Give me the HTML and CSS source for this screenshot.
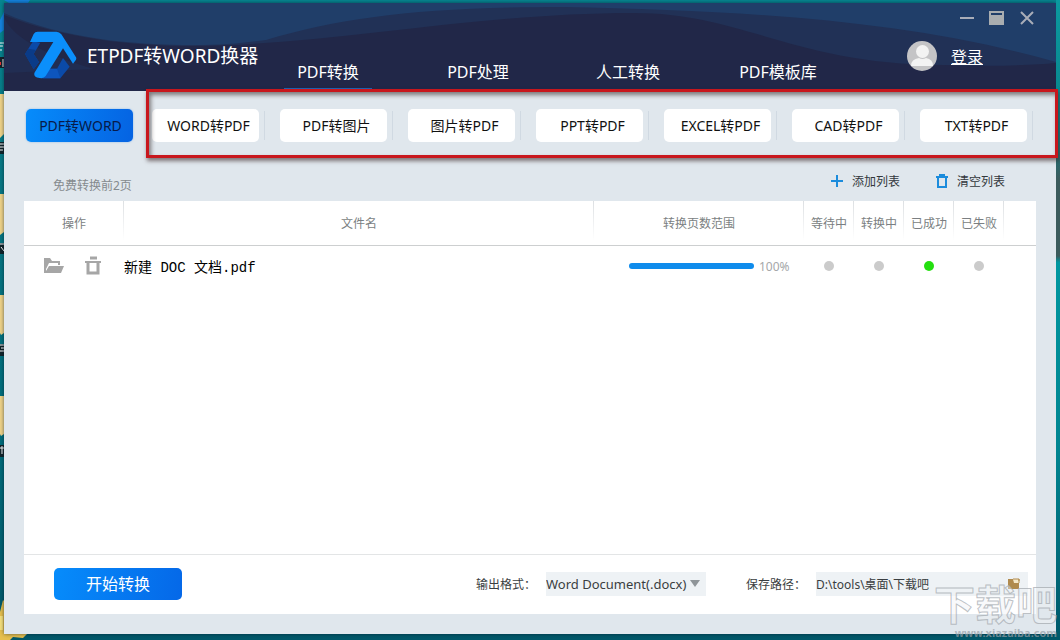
FILE: index.html
```html
<!DOCTYPE html>
<html lang="zh-CN">
<head>
<meta charset="utf-8">
<title>ETPDF转WORD换器</title>
<link rel="stylesheet" href="styles.css">
</head>
<body>
<svg class="desktop-icons" width="32" height="640" viewBox="0 0 32 640" aria-hidden="true">
  <path d="M4 0h26l-2 3H9z" fill="#1583e0"/>
  <path d="M0 20l4-8v18l-4 3z" fill="#1583e0"/>
  <path d="M0 43h4M0 46h3M0 50h2" stroke="#fff"/>
  <path d="M0 57h4v11H0z" fill="#15232b"/><path d="M0 62h1v3H0z" fill="#e33"/><path d="M3 59v8" stroke="#fff"/>
  <g fill="#f0d489"><path d="M0 94h4v40l-4 4z"/><path d="M0 194h4v38l-4 3z"/><path d="M0 295h4v38l-3 2-1-2z"/><path d="M0 396h4v38l-3 2-1-2z"/></g>
  <g fill="#12242a"><path d="M0 142h4v12H0z"/><path d="M0 243h4v11H0z"/><path d="M0 344h4v12H0z"/><path d="M0 445h4v12H0z"/></g>
  <path d="M0 144h4M0 147h4M0 150h3M0 244h4M1 247l3 4M0 345h4M1 348h3M0 351h4M0 448h4M2 446v8" stroke="#fff"/>
  <path d="M0 612l3-12 2 2v32h22l-4 4-10-1-3 3H0z" fill="#e6bf4e"/>
  <path d="M0 616h3v14H0z" fill="#f6e07c"/>
</svg>
<div class="window">
  <header class="header">
    <svg class="waves" viewBox="0 0 1052 88" preserveAspectRatio="none" aria-hidden="true">
      <path d="M0 12C0 12 0 40 90 66L0 70z" fill="#212d52"/>
      <path d="M0 12C60 36 130 43 190 43C330 42 470 10 630 10C740 10 790 62 940 62C990 64 1030 62 1052 60V0H0z" fill="#213156"/>
      <path d="M0 10C60 36 130 42 190 42C220 42 240 40 262 37C340 14 420 4 560 4C740 8 900 16 1052 59V0H0z" fill="#203e69"/>
    </svg>
    <div class="brand">
      <svg class="logo" width="64" height="58" viewBox="0 0 192 174" aria-hidden="true">
        <path d="M42 46L18 84L44 130L60 108L44 84L64 50z" fill="#0b4aa8"/>
        <path d="M18 84l10-16 22 4-6 12 16 24-16 22z" fill="#0a3b88"/>
        <path d="M66 157H124L152 122L132 96L114 128H88z" fill="#0b4aa8"/>
        <path d="M88 128h26l10 29H70z" fill="#0d55bd"/>
        <path d="M44 24Q48 17 56 17H112Q121 17 127 25L171 94Q173 97 171 101L162 113L132 67L80 150Q74 158 62 156Q43 155 46 141L103 48H33z" fill="#0b8ffb"/>
      </svg>
      <h1 class="title">ETPDF转WORD换器</h1>
    </div>
    <nav class="nav">
      <a class="nav-item active" href="#convert">PDF转换</a>
      <a class="nav-item" href="#process">PDF处理</a>
      <a class="nav-item" href="#manual">人工转换</a>
      <a class="nav-item" href="#templates">PDF模板库</a>
    </nav>
    <div class="account">
      <div class="controls">
        <button class="control" aria-label="最小化"><svg width="16" height="16" viewBox="0 0 16 16"><path d="M1 8h14" stroke="#a9adb8" stroke-width="2"/></svg></button>
        <button class="control" aria-label="最大化"><svg width="16" height="16" viewBox="0 0 16 16"><path fill-rule="evenodd" d="M0 1h15v14H0zM2 3v2h11V3z" fill="#a9adb0"/></svg></button>
        <button class="control" aria-label="关闭"><svg width="16" height="16" viewBox="0 0 16 16"><path d="M2 2l12 12M14 2L2 14" stroke="#a9adb8" stroke-width="2"/></svg></button>
      </div>
      <div class="login">
        <svg width="30" height="30" viewBox="0 0 30 30" aria-hidden="true"><circle cx="15" cy="15" r="15" fill="#c4c4c6"/><circle cx="15.500" cy="10.500" r="6.500" fill="#f3f3f3"/><path d="M4 25Q4 18 12 17Q15.500 19 19 17Q26 18 26 25z" fill="#f3f3f3"/></svg>
        <a href="#login">登录</a>
      </div>
    </div>
  </header>

  <section class="modes">
    <button class="mode selected">PDF转WORD</button>
    <button class="mode">WORD转PDF</button>
    <button class="mode">PDF转图片</button>
    <button class="mode">图片转PDF</button>
    <button class="mode">PPT转PDF</button>
    <button class="mode">EXCEL转PDF</button>
    <button class="mode">CAD转PDF</button>
    <button class="mode">TXT转PDF</button>
    <div class="highlight"></div>
  </section>

  <div class="list-bar">
    <span class="hint">免费转换前2页</span>
    <div class="list-actions">
      <button class="action"><svg width="14" height="14" viewBox="0 0 14 14"><path d="M7 1v12M1 7h12" stroke="#1c8cdc" stroke-width="2"/></svg>添加列表</button>
      <button class="action"><svg width="14" height="14" viewBox="0 0 14 14"><path d="M3 4v9h8V4M1 3h12M4 1h6" fill="none" stroke="#1c8cdc" stroke-width="2"/></svg>清空列表</button>
    </div>
  </div>

  <main class="panel">
    <table class="files">
      <colgroup><col class="c-op"><col><col class="c-range"><col class="c-state"><col class="c-state"><col class="c-state"><col class="c-state"><col class="c-end"></colgroup>
      <thead>
        <tr><th>操作</th><th>文件名</th><th>转换页数范围</th><th>等待中</th><th>转换中</th><th>已成功</th><th>已失败</th><td></td></tr>
      </thead>
      <tbody>
        <tr>
          <td>
            <div class="row-tools">
              <button class="tool" aria-label="打开文件夹"><svg width="20" height="20" viewBox="0 0 20 20"><path d="M0 2h6l2 3h8v4h-2V7H5L2 13v4H0z" fill="#a6a6a6"/><path d="M5 10h15l-3 7H0v-2h2z" fill="#a6a6a6"/></svg></button>
              <button class="tool" aria-label="删除"><svg width="20" height="20" viewBox="0 0 20 20"><path d="M4 6v11h10V6" fill="none" stroke="#a6a6a6" stroke-width="3"/><path d="M1 6h16" stroke="#a6a6a6" stroke-width="2"/><path d="M6 2h7" stroke="#a6a6a6" stroke-width="3"/></svg></button>
            </div>
          </td>
          <td class="file-name">新建 DOC 文档.pdf</td>
          <td><div class="progress"><progress class="bar" id="p1" max="100" value="100"></progress><label for="p1">100%</label></div></td>
          <td><span class="dot"></span></td>
          <td><span class="dot"></span></td>
          <td><span class="dot done"></span></td>
          <td><span class="dot"></span></td>
          <td></td>
        </tr>
      </tbody>
    </table>
    <footer class="footer">
      <button class="start">开始转换</button>
      <div class="field">
        <label for="format">输出格式：</label>
        <div class="select-box">
          <select id="format"><option>Word Document(.docx)</option></select>
          <svg class="caret" width="10" height="7" viewBox="0 0 10 7" aria-hidden="true"><path d="M0 0h10L5 7z" fill="#8f9599"/></svg>
        </div>
      </div>
      <div class="field">
        <label for="path">保存路径：</label>
        <div class="path-box">
          <input id="path" type="text" value="D:\tools\桌面\下载吧">
          <button class="browse" aria-label="浏览"><svg width="12" height="12" viewBox="0 0 12 12"><path d="M0 1h5l1 2h5v8H0z" fill="#b08a4d"/><path d="M5 1h6v4H6z" fill="#f4e7c8"/><path d="M5 1h6v2M11 1v4" fill="none" stroke="#b08a4d"/><path d="M0 5h5l1 1h5v5H0z" fill="#b08a4d"/></svg></button>
        </div>
      </div>
    </footer>
  </main>
</div>
<div class="watermark"><span class="mark-name">下载吧</span><span class="mark-url">www.xiazaiba.com</span></div>
</body>
</html>
```
FILE: styles.css
```css
* { box-sizing: border-box; }

body {
  margin: 0;
  min-height: 100vh;
  padding: 3px 4px 6px;
  display: flex;
  position: relative;
  overflow: hidden;
  background: linear-gradient(#078691, #087884 30%, #006d7c 70%, #00586a);
  font-family: "Noto Sans", "Noto Sans CJK SC", sans-serif;
  font-size: 12px;
}

body::after {
  content: "";
  position: absolute;
  top: 0;
  right: 0;
  bottom: 0;
  width: 4px;
  background: linear-gradient(#0b9a9f, #08828a 20%, #3b5b5c 28%, #3b5b5c 40%, #0097a0 41%, #008591 70%, #00586a);
}

button, input, select {
  margin: 0;
  padding: 0;
  border: 0;
  background: none;
  color: inherit;
  font: inherit;
}

a { color: inherit; }

.desktop-icons {
  position: absolute;
  left: 0;
  top: 0;
}

.window {
  position: relative;
  flex: 1;
  display: flex;
  flex-direction: column;
  background: #e0e7ed;
  box-shadow: 0 0 4px rgba(0, 20, 30, 0.6);
}

.header {
  position: relative;
  display: flex;
  height: 88px;
  background: #212748;
  color: #fff;
}

.waves {
  position: absolute;
  width: 100%;
  height: 100%;
}

.brand {
  position: relative;
  display: flex;
  align-items: center;
  width: 249px;
  padding: 15px 0 0 15px;
  gap: 4px;
}

.logo { flex: none; }

.title {
  margin: 0;
  font-size: 19px;
  font-weight: 400;
  white-space: nowrap;
}

.nav {
  position: relative;
  display: grid;
  grid-template-columns: repeat(4, 150px);
  justify-items: center;
  align-items: end;
  flex: 1;
}

.nav-item {
  width: 88px;
  height: 32px;
  line-height: 26px;
  border-bottom: 3px solid transparent;
  font-size: 16px;
  text-align: center;
  text-decoration: none;
  white-space: nowrap;
}

.nav-item.active { border-color: #1d62b4; }

.account {
  position: relative;
  display: flex;
  flex-direction: column;
  gap: 15px;
  width: 153px;
  padding-top: 7px;
}

.controls {
  display: flex;
  justify-content: flex-end;
  gap: 14px;
  padding-right: 21px;
}

.control { height: 16px; width: 16px; }
.control svg, .tool svg, .browse svg, .action svg { display: block; }

.login {
  display: flex;
  align-items: center;
  gap: 14px;
  padding-left: 4px;
  font-size: 16px;
}

.modes {
  position: relative;
  display: grid;
  grid-template-columns: repeat(8, 1fr);
  height: 69px;
  padding: 18px 8px 18px 20px;
}

.mode {
  position: relative;
  margin-right: 21px;
  padding: 0 0 2px 6px;
  border-radius: 5px;
  background: #fff;
  color: #111;
  font-size: 14px;
  white-space: nowrap;
}

.mode::after {
  content: "";
  position: absolute;
  right: -6px;
  top: 2px;
  bottom: 2px;
  width: 1px;
  background: #d0d9e2;
}

.mode.selected {
  margin: 0 19px 0 2px;
  padding-left: 2px;
  background: linear-gradient(100deg, #068cfb, #0563e2);
  color: #071a4a;
  box-shadow: 0 0 2px #7fb4ec;
}

.mode.selected::after { content: none; }

.highlight {
  position: absolute;
  left: 142px;
  right: -2px;
  top: -2px;
  bottom: 2px;
  border: 3px solid #c8171d;
  box-shadow: 1px 3px 4px rgba(60, 40, 40, 0.6), inset 2px 3px 4px rgba(60, 50, 50, 0.6);
  pointer-events: none;
  z-index: 1;
}

.list-bar {
  display: flex;
  justify-content: space-between;
  align-items: center;
  height: 41px;
  padding: 0 51px 0 49px;
}

.hint {
  padding-top: 8px;
  color: #858a8e;
}

.list-actions {
  display: flex;
  gap: 35px;
}

.action {
  display: flex;
  align-items: center;
  gap: 8px;
  color: #33383c;
}

.panel {
  flex: 1;
  display: flex;
  flex-direction: column;
  margin: 0 20px 20px;
  background: #fff;
}

.files {
  width: 100%;
  border-collapse: collapse;
  table-layout: fixed;
}

.c-op { width: 100px; }
.c-range { width: 210px; }
.c-state { width: 50px; }
.c-end { width: 32px; }

.files th, .files td { padding: 0; }

.files thead tr {
  height: 44px;
  border-bottom: 1px solid #cdcfd0;
}

.files th {
  background: linear-gradient(#dcdfe2, #fff 90%) right / 1px 100% no-repeat;
  color: #7b7f82;
  font-weight: 400;
}

.files tbody tr { height: 42px; }

.row-tools {
  display: flex;
  gap: 20px;
  padding-left: 20px;
}

.tool { width: 20px; height: 20px; }

.files .file-name {
  color: #000;
  font-family: "Liberation Mono", "Noto Sans CJK SC", monospace;
  font-size: 14px;
}

.progress {
  display: flex;
  align-items: center;
  gap: 5px;
  padding-left: 35px;
  color: #a5a7a9;
}

.bar {
  appearance: none;
  width: 125px;
  height: 6px;
  border: 0;
  border-radius: 3px;
  overflow: hidden;
  background: #e0e7ed;
}

.bar::-webkit-progress-bar { background: #e0e7ed; }
.bar::-webkit-progress-value { background: #0f8cec; }

.dot {
  display: block;
  width: 10px;
  height: 10px;
  margin: 0 auto;
  border-radius: 50%;
  background: #cbcbcb;
}

.dot.done { background: #24df10; }

.footer {
  display: flex;
  align-items: center;
  height: 60px;
  margin-top: auto;
  padding: 0 8px 2px 30px;
  border-top: 1px solid #e3e5e6;
  color: #3a3e41;
}

.start {
  width: 128px;
  height: 32px;
  margin-right: auto;
  padding-bottom: 2px;
  border-radius: 5px;
  background: linear-gradient(100deg, #068cfb, #0568e8);
  color: #fff;
  font-size: 16px;
}

.field {
  display: flex;
  align-items: center;
  margin-left: 40px;
}

.field label { width: 70px; }

.select-box {
  position: relative;
  width: 160px;
  height: 24px;
}

.select-box select {
  appearance: none;
  width: 100%;
  height: 100%;
  background: #eef2f5;
  font-size: 13px;
}

.caret {
  position: absolute;
  right: 6px;
  top: 8px;
  pointer-events: none;
}

.path-box {
  display: flex;
  align-items: center;
  width: 212px;
  height: 24px;
  padding-right: 8px;
  background: #eef2f5;
}

.path-box input {
  flex: 1;
  min-width: 0;
  height: 100%;
}

.browse { width: 12px; height: 12px; }

.watermark {
  position: absolute;
  right: 3px;
  bottom: 0;
  z-index: 2;
  display: flex;
  flex-direction: column;
  align-items: flex-end;
  pointer-events: none;
  font-weight: 700;
}

.mark-name {
  color: rgba(240, 243, 246, 0.45);
  font-size: 41px;
  line-height: 44px;
  -webkit-text-stroke: 1px rgba(160, 166, 172, 0.7);
}

.mark-url {
  color: rgba(150, 160, 168, 0.7);
  font-size: 11px;
  line-height: 14px;
}
```
